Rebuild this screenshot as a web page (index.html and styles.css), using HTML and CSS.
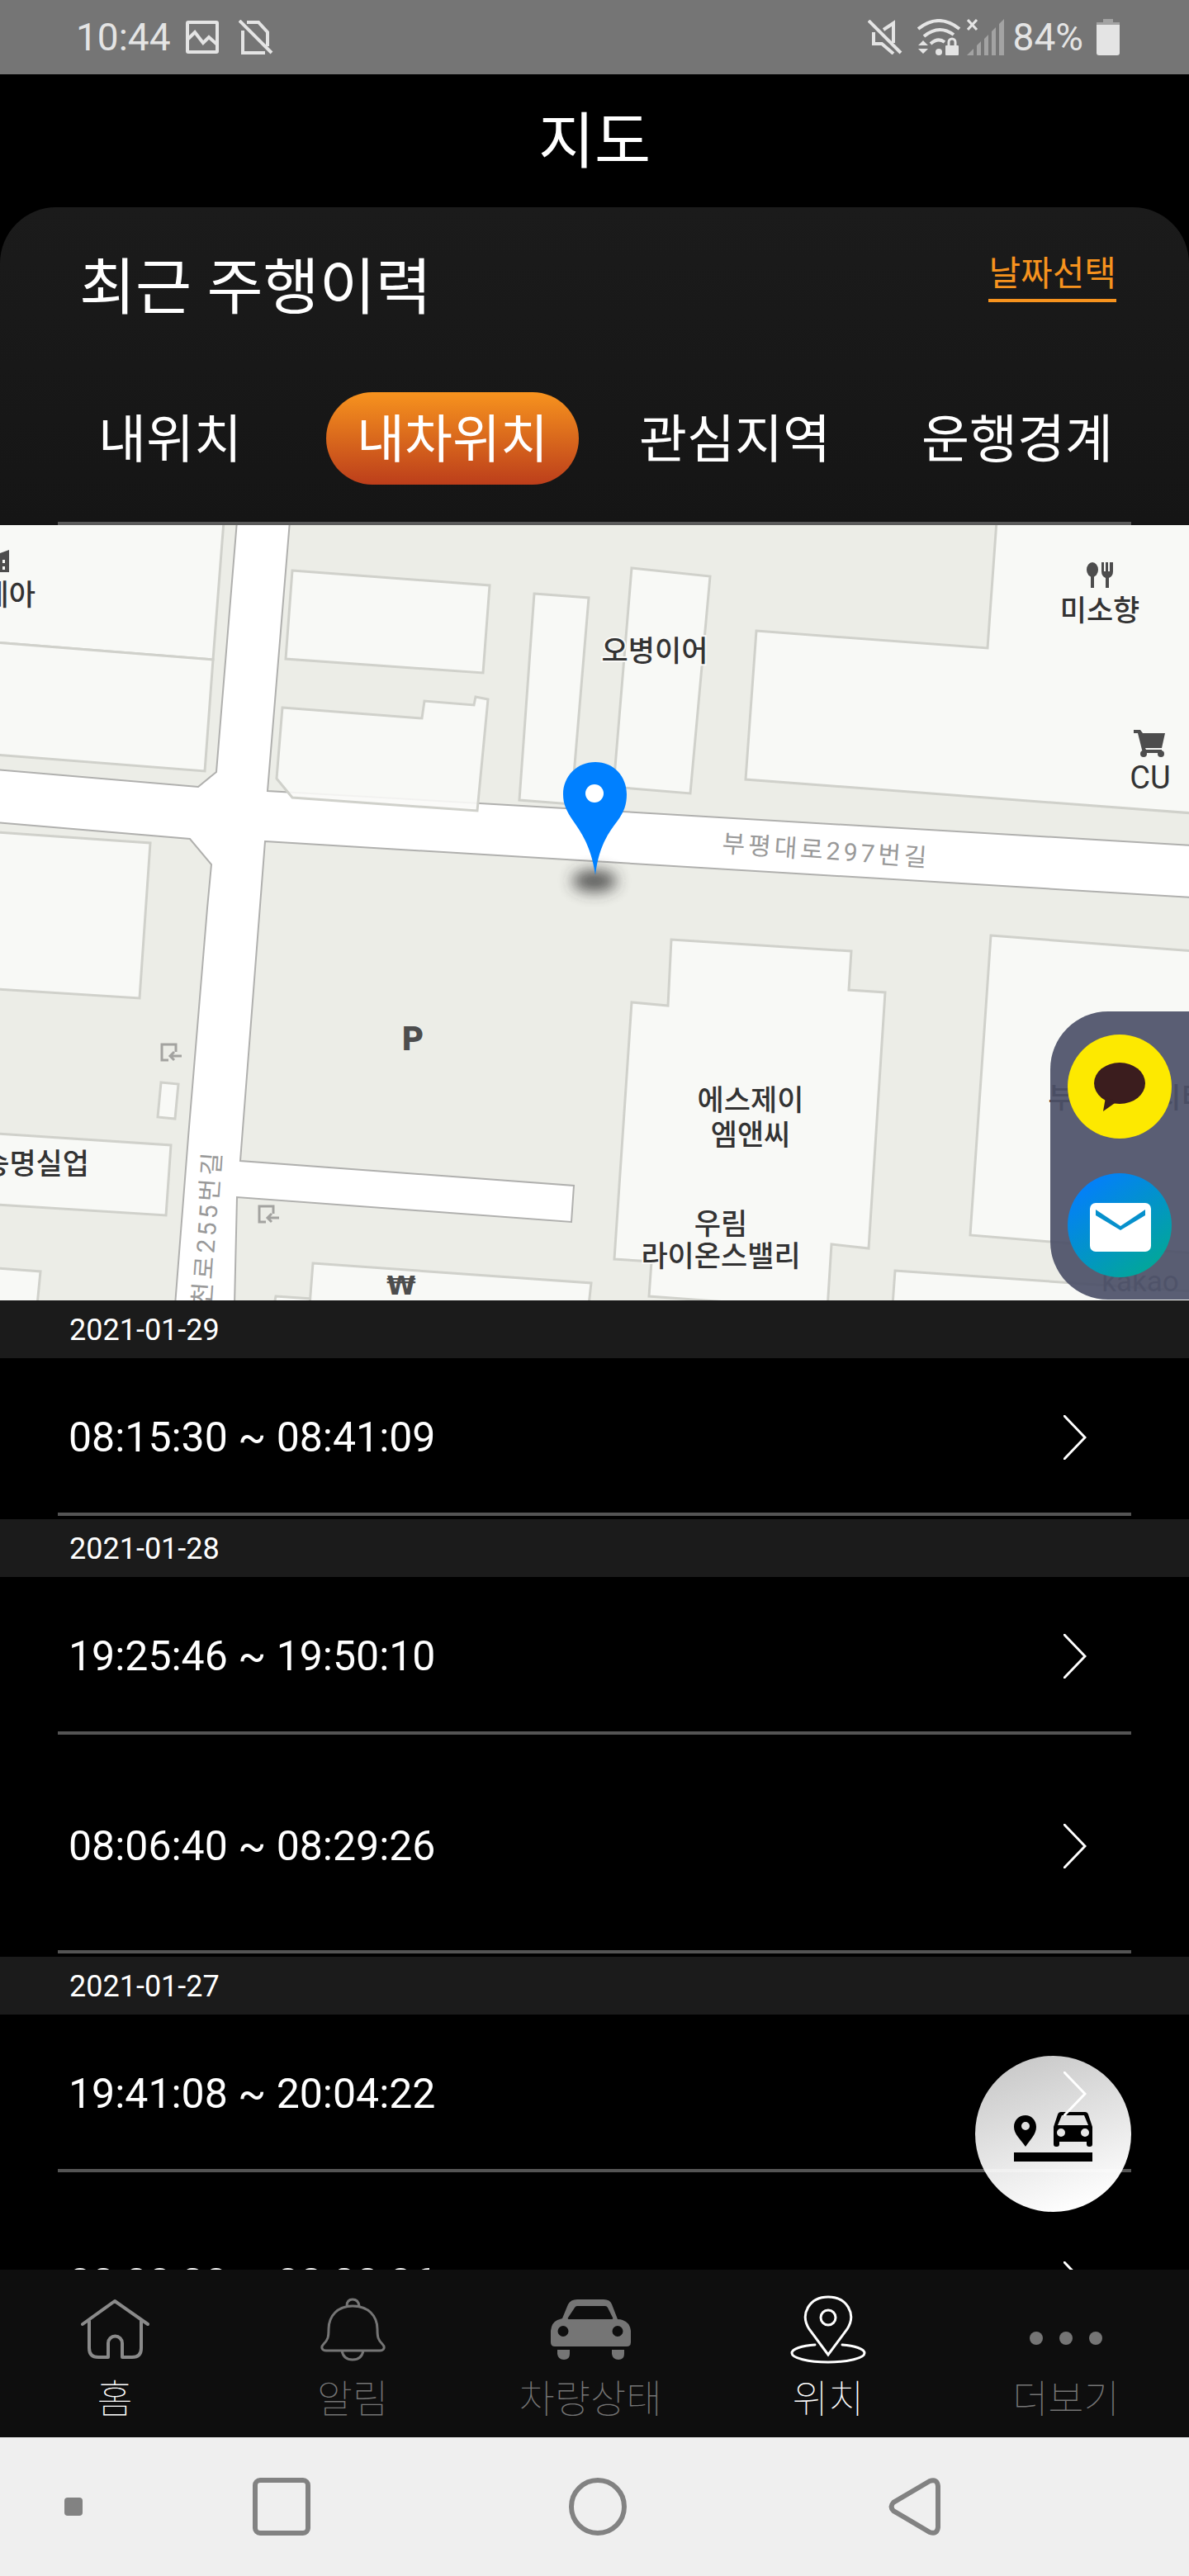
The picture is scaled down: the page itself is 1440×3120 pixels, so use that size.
FILE: index.html
```html
<!DOCTYPE html>
<html lang="ko">
<head>
    <meta charset="UTF-8">
    <meta name="viewport" content="width=device-width, initial-scale=1.0">
    <title>지도</title>
    <link rel="stylesheet" href="styles.css">
</head>
<body>
    <div class="app">
        <div class="status-bar">
            <span class="status-time">10:44</span>
            <svg class="status-image" width="40" height="40" viewBox="0 0 40 40" fill="none" stroke="currentColor" stroke-width="4">
                <rect x="2" y="2" width="36" height="36" rx="1"/>
                <path d="M3 22l8-8 10 13 7-7 10 9"/>
            </svg>
            <svg class="status-sim" width="42" height="42" viewBox="0 0 42 42" fill="none" stroke="currentColor" stroke-width="4">
                <path d="M10 3h14l11 12v17M5 13v27h27M1 1l39 39"/>
            </svg>
            <div class="status-right">
                <svg width="42" height="42" viewBox="0 0 42 42" fill="none" stroke="currentColor" stroke-width="4">
                    <path d="M19 12L31 4v24M7 15v14h10l14 12M1 1l39 39"/>
                </svg>
                <svg width="52" height="44" viewBox="0 0 52 44" fill="none" stroke="currentColor" stroke-width="4">
                    <path d="M1 12Q26-8 51 12M8 21Q26 6 44 19M16 30Q25 22 33 28"/>
                    <circle cx="26" cy="40" r="4" fill="currentColor" stroke="none"/>
                    <path d="M1 32l6-6 6 6zM1 36l6 6 6-6z" fill="currentColor" stroke="none"/>
                    <rect x="34" y="32" width="16" height="12" rx="1" fill="currentColor" stroke="none"/>
                    <path d="M38 33v-5a4 4 0 0 1 8 0v5" stroke-width="3"/>
                </svg>
                <svg width="46" height="44" viewBox="0 0 46 44">
                    <path d="M1 1l11 12M12 1L1 13" stroke="currentColor" stroke-width="3"/>
                    <path d="M0 44l8-8v8zM12 44V32l5-5v17zM21 44V24l5-5v25zM30 44V15l5-5v34zM39 44V6l6-6v44z" fill="#a3a3a3"/>
                </svg>
                <span class="status-percent">84%</span>
                <svg width="28" height="44" viewBox="0 0 28 44">
                    <path d="M8 0h12v4h8v4H0V4h8z" fill="#a3a3a3"/>
                    <path d="M0 7h28v34q0 3-3 3H3q-3 0-3-3z" fill="currentColor"/>
                </svg>
            </div>
        </div>

        <header class="page-header">
            <h1 class="page-title">지도</h1>
        </header>

        <section class="panel">
            <div class="panel-head">
                <h2 class="panel-title">최근 주행이력</h2>
                <a href="#" class="date-select">날짜선택</a>
            </div>
            <div class="tabs">
                <button type="button" class="tab">내위치</button>
                <button type="button" class="tab active">내차위치</button>
                <button type="button" class="tab">관심지역</button>
                <button type="button" class="tab">운행경계</button>
            </div>
            <div class="divider"></div>
        </section>

        <div class="map">
            <svg class="map-canvas" viewBox="0 0 1440 939" preserveAspectRatio="xMidYMid slice">
                <defs>
                    <filter id="shadow" x="-100%" y="-200%" width="300%" height="500%">
                        <feGaussianBlur stdDeviation="9"/>
                    </filter>
                </defs>
                <!-- 블록 -->
                <g class="land">
                    <path d="M-5-5H287L262 299 240 317-5 296z"/>
                    <path d="M351-5L324 322 684 343 754 347 1445 388V-5z"/>
                    <path d="M-5 360L230 380 256 411 251 464 228 741 212 945H-5z"/>
                    <path d="M321 383L1445 451V945H284L287 814 692 844 695 800 291 770z"/>
                </g>
                <!-- 건물 -->
                <g class="building">
                    <path d="M-5-5H271L258 163-5 142z"/>
                    <path d="M-5 142L258 163 248 298-5 278z"/>
                    <path d="M354 55L593 73 585 179 346 162z"/>
                    <path d="M342 221L511 234 514 213 574 218 576 208 591 211 578 346 354 330 335 307z"/>
                    <path d="M647 83L713 88 692 338 629 333z"/>
                    <path d="M765 52L860 62 836 325 743 317z"/>
                    <path d="M916 128L1196 149 1207-5H1445V349L903 308z"/>
                    <path d="M-5 372L182 385 169 573-5 562z"/>
                    <path d="M195 675L216 677 212 719 191 717z"/>
                    <path d="M-5 737L207 751 201 836-5 823z"/>
                    <path d="M-5 900L49 904 45 945H-5z"/>
                    <path d="M334 934L377 937V945H332z"/>
                    <path d="M379 894L716 918 713 945H375z"/>
                    <path d="M813 502L1031 516 1028 563 1072 566 1052 876 1007 871 1002 950 786 934 789 892 744 889 765 578 809 582z"/>
                    <path d="M1200 497L1445 516V882L1175 860z"/>
                    <path d="M1084 903L1445 928V945H1081z"/>
                </g>
                <!-- 출입구 -->
                <g class="gate">
                    <path d="M204 648h-8v-19h17v9M220 643h-13M211 638l-5 5 5 5"/>
                    <path d="M322 844h-8v-19h17v9M338 839h-13M329 834l-5 5 5 5"/>
                </g>
                <g class="poi">
                    <path d="M0 34l11-4v27H0zM3 42v4h3v-4zM3 50v4h3v-4z" fill-rule="evenodd"/>
                    <ellipse cx="1323" cy="54" rx="7" ry="9"/>
                    <path d="M1321 60h4v16h-4zM1334 45h3v11h2V45h3v11h2V45h4v11q0 6-5 8v12h-4V64q-5-2-5-8z"/>
                    <path d="M1373 248h8l3 4h27l-4 18h-20l1 2h19v4h-23l-6-24h-5z"/>
                    <circle cx="1385" cy="277" r="4"/>
                    <circle cx="1406" cy="277" r="4"/>
                </g>
                <g class="place">
                    <text x="43" y="97" text-anchor="end">세아</text>
                    <text x="793" y="165">오병이어</text>
                    <text x="1332" y="116">미소향</text>
                    <text x="108" y="786" text-anchor="end">승명실업</text>
                    <text x="909" y="709">에스제이</text>
                    <text x="909" y="751">엠앤씨</text>
                    <text x="873" y="859">우림</text>
                    <text x="873" y="898">라이온스밸리</text>
                    <text x="1366" y="706">부평테크시티</text>
                </g>
                <text class="place-en" x="1393" y="319">CU</text>
                <text class="symbol parking" x="500" y="636">P</text>
                <text class="symbol won" x="486" y="932">₩</text>
                <text class="road-name" transform="translate(874 396) rotate(4)">부평대로297번길</text>
                <text class="road-name" text-anchor="end" transform="translate(268 757) rotate(-86)">굴포천로255번길</text>
                <text class="map-logo" x="1381" y="928">kakao</text>
                <!-- 내 차 위치 -->
                <ellipse cx="720" cy="431" rx="27" ry="13" fill="#333" opacity=".8" filter="url(#shadow)"/>
                <path class="marker" d="M721 287c-22 0-39 17-39 39 0 12 4 20 12 32 12 17 22 33 27 66 4-33 14-49 27-66 8-11 11-20 11-32 0-22-16-39-38-39z"/>
                <circle cx="720" cy="325" r="11" fill="#fff"/>
            </svg>
            <div class="share">
                <button type="button" class="share-btn" aria-label="카카오톡">
                    <svg width="126" height="126" viewBox="0 0 126 126">
                        <circle cx="63" cy="63" r="63" fill="#fde900"/>
                        <ellipse cx="63" cy="59" rx="31" ry="25" fill="#3b1d1e"/>
                        <path d="M46 76l-3 17 17-12z" fill="#3b1d1e"/>
                    </svg>
                </button>
                <button type="button" class="share-btn" aria-label="메일">
                    <svg width="126" height="126" viewBox="0 0 126 126">
                        <defs>
                            <linearGradient id="mail" x1=".2" y1=".1" x2=".8" y2=".9">
                                <stop offset="0" stop-color="#0380f8"/>
                                <stop offset="1" stop-color="#02a69b"/>
                            </linearGradient>
                        </defs>
                        <circle cx="63" cy="63" r="63" fill="url(#mail)"/>
                        <rect x="27" y="36" width="74" height="59" rx="7" fill="#fff"/>
                        <path d="M34 44l30 20 30-20v7L64 69 34 51z" fill="#0690cc"/>
                    </svg>
                </button>
            </div>
        </div>

        <main class="history">
            <h3 class="history-date">2021-01-29</h3>
            <a href="#" class="trip">
                <span>08:15:30 ~ 08:41:09</span>
                <svg class="chevron" width="28" height="54" viewBox="0 0 28 54"><path d="M1 1l25 26L1 53"/></svg>
            </a>
            <h3 class="history-date">2021-01-28</h3>
            <a href="#" class="trip">
                <span>19:25:46 ~ 19:50:10</span>
                <svg class="chevron" width="28" height="54" viewBox="0 0 28 54"><path d="M1 1l25 26L1 53"/></svg>
            </a>
            <a href="#" class="trip tall">
                <span>08:06:40 ~ 08:29:26</span>
                <svg class="chevron" width="28" height="54" viewBox="0 0 28 54"><path d="M1 1l25 26L1 53"/></svg>
            </a>
            <h3 class="history-date">2021-01-27</h3>
            <a href="#" class="trip">
                <span>19:41:08 ~ 20:04:22</span>
                <svg class="chevron" width="28" height="54" viewBox="0 0 28 54"><path d="M1 1l25 26L1 53"/></svg>
            </a>
            <a href="#" class="trip tall">
                <span>08:00:30 ~ 08:28:06</span>
                <svg class="chevron" width="28" height="54" viewBox="0 0 28 54"><path d="M1 1l25 26L1 53"/></svg>
            </a>
            <button type="button" class="fab" aria-label="내 차 경로">
                <svg width="189" height="189" viewBox="0 0 189 189">
                    <path fill-rule="evenodd" d="M61 72c-8 0-14 6-14 14 0 9 8 15 14 24 6-9 13-15 13-24 0-8-6-14-13-14zM61 80a5 5 0 1 1 0 10 5 5 0 0 1 0-10z"/>
                    <path fill-rule="evenodd" d="M104 68h29q3 0 4 3l5 15v21q0 3-3 3h-1q-3 0-3-3v-3h-33v3q0 3-3 3h-1q-3 0-3-3V86l5-15q1-3 4-3zM105 72l-5 12h37l-5-12zM104 88a5 5 0 1 0 0 10 5 5 0 0 0 0-10zM133 88a5 5 0 1 0 0 10 5 5 0 0 0 0-10z"/>
                    <path d="M47 117h95v11H47z"/>
                </svg>
            </button>
        </main>

        <nav class="tab-bar">
            <a href="#" class="tab-item home">
                <svg width="100" height="84" viewBox="0 0 100 84" fill="none" stroke="currentColor" stroke-width="4" stroke-linecap="round" stroke-linejoin="round">
                    <path d="M11 35L50 7l40 28M19 31v33q0 11 11 11h12V58a8 8 0 0 1 17 0v17h12q11 0 11-11V31"/>
                </svg>
                <span>홈</span>
            </a>
            <a href="#" class="tab-item">
                <svg width="100" height="84" viewBox="0 0 100 84" fill="none" stroke="currentColor" stroke-width="3">
                    <path d="M43 13q0-8 7-8t8 8M50 13C32 13 21 25 21 41c0 10-1 13-6 18-4 4-2 8 3 8h65c5 0 7-4 3-8-5-5-6-8-6-18 0-16-11-28-30-28zM37 67q2 11 13 11t13-11"/>
                </svg>
                <span>알림</span>
            </a>
            <a href="#" class="tab-item">
                <svg width="100" height="84" viewBox="0 0 100 84" fill="currentColor">
                    <path fill-rule="evenodd" d="M34 5h32q8 0 10 6l7 18q4 0 6 1 9 3 10 13v14q0 5-5 5H7q-5 0-5-5V43q1-10 8-13l6-2 7-17q3-6 11-6zM34 13q-2 0-3 2l-8 12q-1 2 1 2h52q2 0 1-2l-6-12q-1-2-3-2zM17 37a6 6 0 1 0 0 13 6 6 0 0 0 0-13zM83 37a6 6 0 1 0 0 13 6 6 0 0 0 0-13z"/>
                    <path d="M10 66h15v5q0 7-7 7t-8-7zM76 66h15v5q0 7-7 7t-8-7z"/>
                </svg>
                <span>차량상태</span>
            </a>
            <a href="#" class="tab-item active">
                <svg width="100" height="84" viewBox="0 0 100 84" fill="none" stroke="currentColor" stroke-width="3">
                    <path d="M50 72L27 41C15 22 28 2 50 2s35 20 23 39z"/>
                    <circle cx="50" cy="27" r="9"/>
                    <path d="M34 60C18 61 6 65 6 70c0 6 20 11 44 11s44-5 44-11c0-5-12-9-27-10" stroke-linecap="round"/>
                </svg>
                <span>위치</span>
            </a>
            <a href="#" class="tab-item">
                <svg width="100" height="84" viewBox="0 0 100 84" fill="currentColor">
                    <circle cx="14" cy="52" r="8"/>
                    <circle cx="50" cy="52" r="8"/>
                    <circle cx="86" cy="52" r="8"/>
                </svg>
                <span>더보기</span>
            </a>
        </nav>

        <div class="system-bar">
            <span class="system-dot"></span>
            <div class="system-keys">
                <button type="button" class="key" aria-label="최근 앱">
                    <svg width="70" height="70" viewBox="0 0 70 70"><rect x="3" y="3" width="64" height="64" rx="6"/></svg>
                </button>
                <button type="button" class="key" aria-label="홈">
                    <svg width="70" height="70" viewBox="0 0 70 70"><circle cx="35" cy="35" r="32"/></svg>
                </button>
                <button type="button" class="key" aria-label="뒤로">
                    <svg width="70" height="70" viewBox="0 0 70 70"><path d="M54 4L10 30q-5 5 0 10l44 26q9 3 10-6V10q-1-9-10-6z"/></svg>
                </button>
            </div>
        </div>
    </div>
</body>
</html>
```
FILE: styles.css
```css
* {
    box-sizing: border-box;
}

body {
    margin: 0;
    background-color: #000;
    color: #fff;
    font-family: Roboto, "Noto Sans CJK KR", sans-serif;
}

button {
    padding: 0;
    border: 0;
    background: none;
    color: inherit;
    font-family: inherit;
}

a {
    color: inherit;
    text-decoration: none;
}

h1, h2, h3 {
    margin: 0;
    font-weight: 400;
}

svg {
    display: block;
}

.app {
    display: flex;
    flex-direction: column;
    height: 100vh;
}

/* 상태바 */
.status-bar {
    display: flex;
    align-items: center;
    flex-shrink: 0;
    height: 90px;
    padding: 0 84px 0 92px;
    background-color: #757575;
    color: #e4e4e4;
    font-size: 46px;
}

.status-image {
    margin: 0 24px 0 18px;
}

.status-right {
    display: flex;
    align-items: center;
    margin-left: auto;
}

.status-right svg + svg {
    margin-left: 18px;
}

.status-right svg + svg + svg {
    margin-left: 8px;
}

.status-percent {
    margin: 0 16px 0 10px;
}

/* 헤더 */
.page-header {
    flex-shrink: 0;
    height: 161px;
    text-align: center;
}

.page-title {
    font-size: 74px;
    line-height: 164px;
}

.panel {
    flex-shrink: 0;
    padding-top: 48px;
    border-radius: 68px 68px 0 0;
    background: linear-gradient(#1b1b1b, #151515);
}

.panel-head {
    display: flex;
    justify-content: space-between;
    align-items: flex-start;
    padding: 0 88px 0 96px;
}

.panel-title {
    font-size: 74px;
    line-height: 100px;
}

.date-select {
    margin-top: 3px;
    border-bottom: 4px solid #f7931e;
    color: #f7931e;
    font-size: 42px;
    line-height: 60px;
}

.tabs {
    display: grid;
    grid-template-columns: repeat(4, 1fr);
    justify-items: center;
    margin-top: 76px;
    padding: 0 37px 45px 35px;
}

.tab {
    width: 306px;
    height: 112px;
    padding-top: 4px;
    border-radius: 56px;
    font-size: 63px;
    line-height: 104px;
}

.tab.active {
    background: linear-gradient(#f7931e, #bc3e1b);
}

.divider {
    height: 4px;
    margin: 0 70px;
    background-color: rgba(255, 255, 255, 0.3);
}

/* 지도 */
.map {
    position: relative;
    flex-shrink: 0;
    height: 939px;
    background-color: #fff;
}

.map-canvas {
    width: 100%;
    height: 100%;
}

.land {
    fill: #ecede7;
    stroke: #b0b0ae;
    stroke-width: 2;
}

.building {
    fill: #f9f9f7;
    fill-opacity: 0.9;
    stroke: #d0d1cb;
    stroke-width: 3;
}

.gate {
    fill: none;
    stroke: #a3a3a0;
    stroke-width: 3;
}

.poi {
    fill: #4d4d4d;
}

.place {
    fill: #333;
    stroke: #f9f9f7;
    stroke-width: 4;
    paint-order: stroke;
    font-size: 35px;
    font-weight: 500;
    text-anchor: middle;
}

.place-en {
    fill: #333;
    font-size: 38px;
    text-anchor: middle;
}

.symbol {
    fill: #4d4d4d;
    font-weight: 900;
    text-anchor: middle;
}

.symbol.parking {
    font-size: 40px;
}

.symbol.won {
    font-family: "DejaVu Sans", sans-serif;
    font-size: 32px;
}

.road-name {
    fill: #999;
    font-size: 30px;
    letter-spacing: 4px;
}

.map-logo {
    fill: #777;
    font-size: 35px;
    text-anchor: middle;
}

.marker {
    fill: #0080ff;
}

.share {
    position: absolute;
    right: 0;
    bottom: 1px;
    display: flex;
    flex-direction: column;
    gap: 42px;
    padding: 28px 21px 27px;
    border-radius: 70px 0 0 70px;
    background-color: rgba(76, 80, 104, 0.92);
}

/* 주행이력 목록 */
.history {
    position: relative;
    flex: 1;
    min-height: 0;
    overflow: hidden;
}

.history-date {
    height: 70px;
    padding-left: 84px;
    background-color: #1b1b1b;
    font-size: 36px;
    line-height: 72px;
}

.trip {
    position: relative;
    z-index: 1;
    display: flex;
    justify-content: space-between;
    align-items: center;
    height: 191px;
    margin: 0 70px 4px;
    padding: 4px 54px 0 13px;
    border-bottom: 4px solid rgba(255, 255, 255, 0.33);
    font-size: 50px;
}

.trip.tall {
    height: 261px;
}

.chevron {
    fill: none;
    stroke: #fff;
    stroke-width: 3;
    stroke-linecap: round;
}

.fab {
    position: absolute;
    right: 70px;
    bottom: 70px;
    border-radius: 50%;
    background: linear-gradient(160deg, #cacaca 10%, #fff 90%);
}

/* 하단 메뉴 */
.tab-bar {
    display: grid;
    grid-template-columns: repeat(5, 1fr);
    flex-shrink: 0;
    height: 203px;
    padding-top: 31px;
    background-color: #0e0e0e;
}

.tab-item {
    display: flex;
    flex-direction: column;
    align-items: center;
    margin: 0 5px 0 -5px;
    color: #757575;
    font-size: 47px;
    font-weight: 100;
    line-height: 84px;
}

.tab-item.home {
    color: #8a8a8a;
}

.tab-item.home span,
.tab-item.active {
    color: #fff;
}

/* 시스템 내비게이션 */
.system-bar {
    display: flex;
    align-items: center;
    flex-shrink: 0;
    gap: 49px;
    height: 168px;
    padding: 0 142px 0 78px;
    background-color: #efefef;
}

.system-dot {
    width: 22px;
    height: 22px;
    border-radius: 4px;
    background-color: #828282;
}

.system-keys {
    display: grid;
    grid-template-columns: repeat(3, 1fr);
    flex: 1;
    justify-items: center;
}

.key svg {
    fill: none;
    stroke: #828282;
    stroke-width: 6;
}
```
